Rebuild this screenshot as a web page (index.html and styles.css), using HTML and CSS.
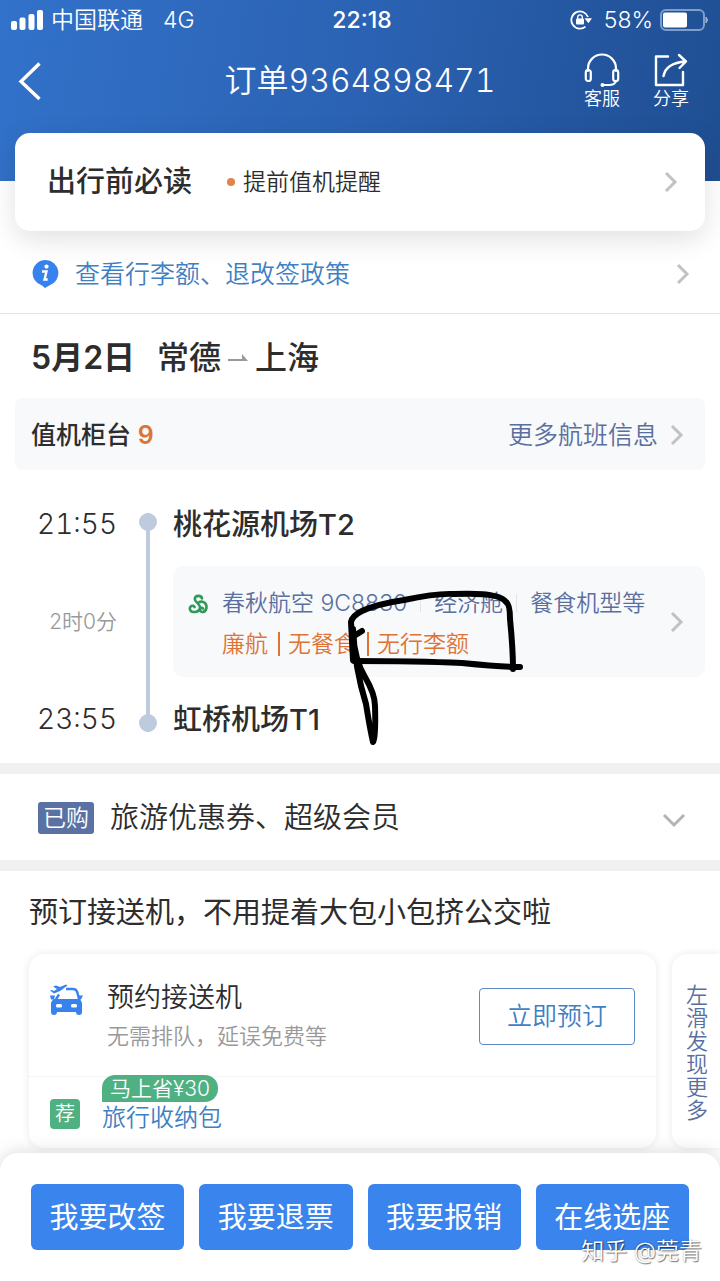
FILE: index.html
```html
<!DOCTYPE html>
<html lang="zh-CN">
<head>
<meta charset="utf-8">
<meta name="viewport" content="width=device-width, initial-scale=1">
<title>订单9364898471</title>
<link rel="stylesheet" href="styles.css">
</head>
<body>
<div class="page">
  <header class="top">
    <div class="status">
      <div class="status-left">
        <svg width="33" height="20" viewBox="0 0 33 20" fill="#fff"><rect x="0" y="11" width="6" height="9" rx="2"/><rect x="8.500" y="7.500" width="6" height="12.500" rx="2"/><rect x="17.500" y="4" width="6" height="16" rx="2"/><rect x="26" y="0" width="6" height="20" rx="2"/></svg>
        <span>中国联通</span>
        <span class="network">4G</span>
      </div>
      <time class="clock">22:18</time>
      <div class="status-right">
        <svg class="lock" width="22" height="20" viewBox="0 0 22 20" fill="none" stroke="#fff" stroke-width="1.800"><path d="M18 7A8.600 8.600 0 1 0 15.500 16.600"/><path d="M14.500 8.200h7.500l-3.600 5z" fill="#fff" stroke="none"/><rect x="6" y="8.600" width="8" height="6" rx="1" fill="#fff" stroke="none"/><path d="M7.700 9V7.200a2.300 2.300 0 0 1 4.600 0V9" stroke-width="1.400"/></svg>
        <span>58%</span>
        <svg width="49" height="22" viewBox="0 0 49 22" fill="none"><rect x="1" y="1" width="43" height="20" rx="5" stroke="#7f9fcb" stroke-width="2"/><rect x="3" y="3.500" width="24" height="15" rx="2" fill="#fff"/><path d="M46 8q3 3 0 6z" fill="#9bb4d8" stroke="#9bb4d8"/></svg>
      </div>
    </div>
    <nav class="nav">
      <button class="back" aria-label="返回"><svg width="24" height="40" viewBox="0 0 24 40" fill="none" stroke="#fff" stroke-width="3.400"><path d="M21.500 2.500 3 20.500 21.500 38"/></svg></button>
      <h1 class="title">订单9364898471</h1>
      <div class="tools">
        <button class="tool"><svg width="36" height="36" viewBox="0 0 36 36" fill="none" stroke="#fff" stroke-width="2.200" stroke-linecap="round"><path d="M4 18v-2.500a14 14 0 0 1 28 0V18"/><rect x="1.800" y="17" width="5" height="11" rx="2.300"/><rect x="29.200" y="17" width="5" height="11" rx="2.300"/><path d="M32 28q-1 4-7 4h-6"/><circle cx="18.500" cy="32" r="2" fill="#fff" stroke="none"/></svg><span>客服</span></button>
        <button class="tool"><svg width="36" height="36" viewBox="0 0 36 36" fill="none" stroke="#fff" stroke-width="2.400" stroke-linecap="round" stroke-linejoin="round"><path d="M15 3.500H3v28.500h27V19"/><path d="M10.500 23Q13 10 32.500 8.500M26 2l7 6.500-6.500 6.500"/></svg><span>分享</span></button>
      </div>
    </nav>
  </header>

  <main>
    <a class="notice" href="#">
      <strong class="notice-title">出行前必读</strong>
      <span class="notice-dot"></span>
      <span class="notice-text">提前值机提醒</span>
      <svg class="chevron" width="15" height="22" viewBox="0 0 15 22"><path d="M2 2l9 9-9 9"/></svg>
    </a>

    <a class="policy" href="#">
      <svg width="27" height="28" viewBox="0 0 27 28"><path d="M13.500 0a13 13 0 0 1 3.800 25.400L13 28l-3-2.500A13 13 0 0 1 13.500 0z" fill="#3782ec"/><circle cx="14.500" cy="6.600" r="2.100" fill="#fff"/><path d="M10 11.500h4.500L12.500 19.500h3.200" fill="none" stroke="#fff" stroke-width="2.400"/></svg>
      <span>查看行李额、退改签政策</span>
      <svg class="chevron" width="15" height="22" viewBox="0 0 15 22"><path d="M2 2l9 9-9 9"/></svg>
    </a>

    <section class="trip">
      <h2 class="route"><span class="date">5月2日</span><span>常德</span><svg width="20" height="8" viewBox="0 0 20 8" fill="#999"><path d="M0 5h14V0l6 7H0z"/></svg><span>上海</span></h2>

      <div class="counter">
        <span class="counter-label">值机柜台 <b>9</b></span>
        <a class="more" href="#">更多航班信息<svg class="chevron" width="15" height="22" viewBox="0 0 15 22"><path d="M2 2l9 9-9 9"/></svg></a>
      </div>

      <div class="timeline">
        <time class="time depart">21:55</time>
        <span class="duration">2时0分</span>
        <time class="time arrive">23:55</time>
        <div class="track"><i></i><i></i></div>
        <strong class="airport">桃花源机场T2</strong>
        <a class="flight" href="#">
          <svg class="airline" width="20" height="20" viewBox="0 0 20 20" fill="none" stroke="#2f9a57" stroke-width="2.600" stroke-linecap="round"><path d="M14 4.500C13.500 1 7 .8 6.800 5c-.2 3.500 5.700 4.500 5.200 9-.5 4.500-9 5.500-10 1.500-1-3.500 3.500-5 4.500-2.500"/><path d="M10.500 8.500c3-2 8-.5 8 4.500 0 6-6 6-6.500 3-.3-2 2-2.800 3-1.500"/></svg>
          <div class="flight-info">
            <div class="facts"><span>春秋航空 9C8830</span><span>经济舱</span><span>餐食机型等</span></div>
            <div class="limits"><span>廉航</span><span>无餐食</span><span>无行李额</span></div>
          </div>
          <svg class="chevron" width="15" height="22" viewBox="0 0 15 22"><path d="M2 2l9 9-9 9"/></svg>
        </a>
        <strong class="airport">虹桥机场T1</strong>
        <svg class="scribble" width="190" height="164" viewBox="0 0 190 164" fill="none" stroke="#000" stroke-width="6" stroke-linecap="round" stroke-linejoin="round"><path d="M20 47l-8 5"/><path d="M11 76L9 38Q10 32 20 27Q35 20 62 16Q95 9 112 10Q158 8 164 18Q168 20 168 35Q171 65 171 85"/><path d="M12 77Q75 77 120 79Q160 83 178 83"/><path d="M11 45Q13 85 24 120Q28 145 31 158Q34 155 33 122Q33 110 23 93Q13 77 11 50"/></svg>
      </div>
    </section>

    <button class="bought">
      <span class="tag">已购</span>
      <span>旅游优惠券、超级会员</span>
      <svg class="chevron" width="24" height="16" viewBox="0 0 24 16"><path d="M2 3l10 10L22 3"/></svg>
    </button>

    <section class="transfer">
      <h2 class="transfer-title">预订接送机，不用提着大包小包挤公交啦</h2>
      <div class="cards">
        <article class="card">
          <div class="service">
            <svg class="car" width="33" height="32" viewBox="0 0 33 32" fill="#3782ec"><path d="M3 2.500l3-1 4 1.500 6-2.500 1.500 1L10 7 4 9.500 0 6.500l1.500-.5L4 7l3-2z"/><path d="M5 17l4-6.500M16 5h7q3.500 0 4.500 4l2 8" fill="none" stroke="#3782ec" stroke-width="2.400"/><path d="M5 15h23q4 1 4 5v8q0 3-3 3t-3-3H7q0 3-3 3t-3-3v-8q0-4 4-5zM0 11.500h5l-1 4H1zM28 11.500h5l-2 4h-3z"/><rect x="6" y="20" width="6" height="3.500" rx="1.500" fill="#fff"/><rect x="21" y="20" width="6" height="3.500" rx="1.500" fill="#fff"/></svg>
            <div class="service-text">
              <h3>预约接送机</h3>
              <p>无需排队，延误免费等</p>
            </div>
            <button class="book">立即预订</button>
          </div>
          <div class="extra">
            <span class="pick">荐</span>
            <a class="bag" href="#">旅行收纳包<span class="saving">马上省¥30</span></a>
          </div>
        </article>
        <aside class="swipe">左滑发现更多</aside>
      </div>
    </section>
  </main>

  <footer class="actions">
    <button>我要改签</button>
    <button>我要退票</button>
    <button>我要报销</button>
    <button>在线选座</button>
    <span class="watermark">知乎 @莞青</span>
  </footer>
</div>
</body>
</html>
```
FILE: styles.css
```css
* { box-sizing: border-box; }
body, h1, h2, h3, p { margin: 0; }
body {
  background: #fff;
  color: #2d2d2d;
  font-family: Inter, "Noto Sans CJK SC", sans-serif;
  font-size: 23px;
  font-weight: 350;
  line-height: 32px;
}
button { margin: 0; padding: 0; border: 0; background: none; color: inherit; font: inherit; }
a { color: inherit; text-decoration: none; }
svg { flex: none; display: block; }
.page { overflow: hidden; min-height: 100vh; display: flex; flex-direction: column; }

.chevron { margin-left: auto; fill: none; stroke: #c2c2c4; stroke-width: 3; }

/* header */
.top {
  height: 181px;
  background: linear-gradient(100deg, #3272ca 0%, #2b62b3 50%, #1f4e92 100%);
  color: #fff;
}
.status { display: grid; grid-template-columns: 1fr auto 1fr; align-items: center; height: 40px; padding: 0 11px; }
.status-left, .status-right { display: flex; align-items: center; gap: 7px; }
.status-right { justify-content: flex-end; }
.network { margin-left: 13px; }
.clock { padding-left: 4px; font-weight: 500; }
.lock { margin-right: 5px; }
.nav { display: grid; grid-template-columns: 1fr auto 1fr; align-items: center; height: 82px; padding: 0 31px; }
.back { justify-self: start; margin-left: -13px; }
.title { font-size: 32px; font-weight: 350; font-variant-numeric: tabular-nums; line-height: 40px; }
.tools { display: flex; justify-content: flex-end; gap: 33px; }
.tool { display: grid; justify-items: center; width: 36px; font-size: 18px; line-height: 20px; white-space: nowrap; }

/* notice card */
.notice {
  position: relative;
  display: flex;
  align-items: center;
  height: 98px;
  margin: -48px 15px 0;
  padding: 0 26px 0 32px;
  border-radius: 15px;
  background: #fff;
  box-shadow: 0 8px 28px rgba(0, 0, 0, 0.12);
}
.notice-title { font-size: 29px; font-weight: 500; }
.notice-dot { width: 8px; height: 8px; margin: 0 8px 0 35px; border-radius: 50%; background: #e0834f; }

.policy {
  display: flex;
  align-items: center;
  gap: 16px;
  height: 83px;
  padding: 3px 29px 0 32px;
  border-bottom: 1px solid #e3e3e3;
  color: #3f7fc4;
  font-size: 25px;
}

/* trip */
.trip { padding: 24px 15px 26px; }
.route { display: flex; align-items: center; gap: 7px; height: 40px; padding-left: 16px; font-size: 32px; font-weight: 500; }
.date { margin-right: 15px; font-weight: 600; }
.counter {
  display: flex;
  align-items: center;
  justify-content: space-between;
  height: 72px;
  margin-top: 20px;
  padding: 2px 20px 0 16px;
  border-radius: 8px;
  background: #f8f9fa;
  font-size: 25px;
}
.counter-label { font-weight: 500; }
.counter-label b { color: #dd7436; font-weight: 600; }
.more { display: flex; align-items: center; gap: 12px; color: #596fa0; }

.timeline {
  position: relative;
  display: grid;
  grid-template: 36px 111px 36px / 102px 40px 1fr;
  grid-auto-flow: column;
  row-gap: 24px;
  align-items: center;
  margin-top: 36px;
}
.time { justify-self: end; font-size: 28px; font-variant-numeric: tabular-nums; }
.duration { justify-self: end; color: #999; font-size: 21px; }
.track {
  grid-row: 1 / 4;
  justify-self: end;
  align-self: stretch;
  display: flex;
  flex-direction: column;
  justify-content: space-between;
  width: 18px;
  margin: 7px 0 5px;
  background: linear-gradient(#becade, #becade) center / 4px 100% no-repeat;
}
.track i { width: 18px; height: 18px; border-radius: 50%; background: #becade; }
.airport, .flight { margin-left: 16px; }
.airport { padding-top: 2px; font-size: 29px; font-weight: 500; }
.flight {
  display: flex;
  align-items: center;
  height: 111px;
  padding: 0 20px 0 15px;
  border-radius: 10px;
  background: #f8f9fa;
  white-space: nowrap;
}
.airline { align-self: flex-start; margin-top: 28px; }
.flight-info { margin-left: 14px; padding-top: 4px; line-height: 41px; }
.facts, .limits { display: flex; align-items: center; }
.facts { color: #596fa0; }
.facts span + span { margin-left: 13px; padding-left: 14px; background: linear-gradient(#dfe3ea, #dfe3ea) left / 1px 18px no-repeat; }
.limits { color: #dd7436; }
.limits span + span { margin-left: 10px; padding-left: 10px; background: linear-gradient(#dd7436, #dd7436) left / 2px 24px no-repeat; }
.scribble { position: absolute; left: 327px; top: 78px; }

/* purchased */
.bought {
  display: flex;
  align-items: center;
  gap: 16px;
  width: 100%;
  height: 108px;
  padding: 2px 34px 0 38px;
  border: solid #f0f0f0;
  border-width: 11px 0;
  font-size: 29px;
}
.bought .chevron { margin-top: 4px; stroke: #b4b4b6; }
.tag { padding: 0 5px; border-radius: 3px; background: #5a72a3; color: #fff; font-size: 23px; }

/* transfer */
.transfer { padding: 24px 0 5px 29px; }
.transfer-title { font-size: 29px; font-weight: 400; line-height: 36px; }
.cards { display: flex; gap: 16px; margin-top: 23px; }
.card { flex: 1; height: 194px; border-radius: 15px; background: #fff; box-shadow: 0 0 8px rgba(0, 0, 0, 0.09); }
.service { display: flex; align-items: center; height: 123px; padding: 2px 21px 0; border-bottom: 1px solid #f3f3f3; }
.car { align-self: flex-start; margin-top: 28px; }
.service-text { margin-left: 24px; }
.service-text h3 { font-size: 27px; font-weight: 350; line-height: 40px; }
.service-text p { color: #999; font-size: 22px; line-height: 36px; }
.book { width: 156px; height: 57px; margin-left: auto; border: 1px solid #5b8bc2; border-radius: 4px; color: #3f7fc4; font-size: 25px; }
.extra { display: flex; align-items: center; height: 70px; padding: 4px 21px 0; }
.pick { width: 30px; border-radius: 4px; background: #4fb182; color: #fff; font-size: 20px; line-height: 30px; text-align: center; }
.bag { position: relative; margin: 7px 0 0 22px; color: #3f7fc4; font-size: 24px; }
.saving {
  position: absolute;
  left: 0;
  bottom: 32px;
  padding: 0 8px;
  border-radius: 13px 13px 13px 0;
  background: #4fb182;
  color: #fff;
  font-size: 21px;
  line-height: 27px;
  white-space: nowrap;
}
.swipe {
  width: 48px;
  padding: 30px 11px 0 14px;
  border-radius: 15px 0 0 15px;
  box-shadow: 0 0 8px rgba(0, 0, 0, 0.09);
  color: #596fa0;
  font-size: 22px;
  line-height: 23px;
  overflow-wrap: anywhere;
}

/* bottom actions */
.actions {
  position: relative;
  flex: 1;
  display: grid;
  grid-template-columns: repeat(4, 1fr);
  align-items: start;
  gap: 15px;
  padding: 31px 31px 30px;
  border-radius: 18px 18px 0 0;
  background: #fff;
  box-shadow: 0 0 18px rgba(0, 0, 0, 0.16);
}
.actions button { height: 66px; padding-top: 2px; border-radius: 6px; background: #3a84ee; color: #fff; font-size: 29px; font-weight: 400; }
.watermark { position: absolute; right: 18px; bottom: 14px; color: #fff; font-weight: 350; text-shadow: 1px 1px 1px rgba(0, 0, 0, 0.5), 0 0 2px rgba(0, 0, 0, 0.3); }
```
